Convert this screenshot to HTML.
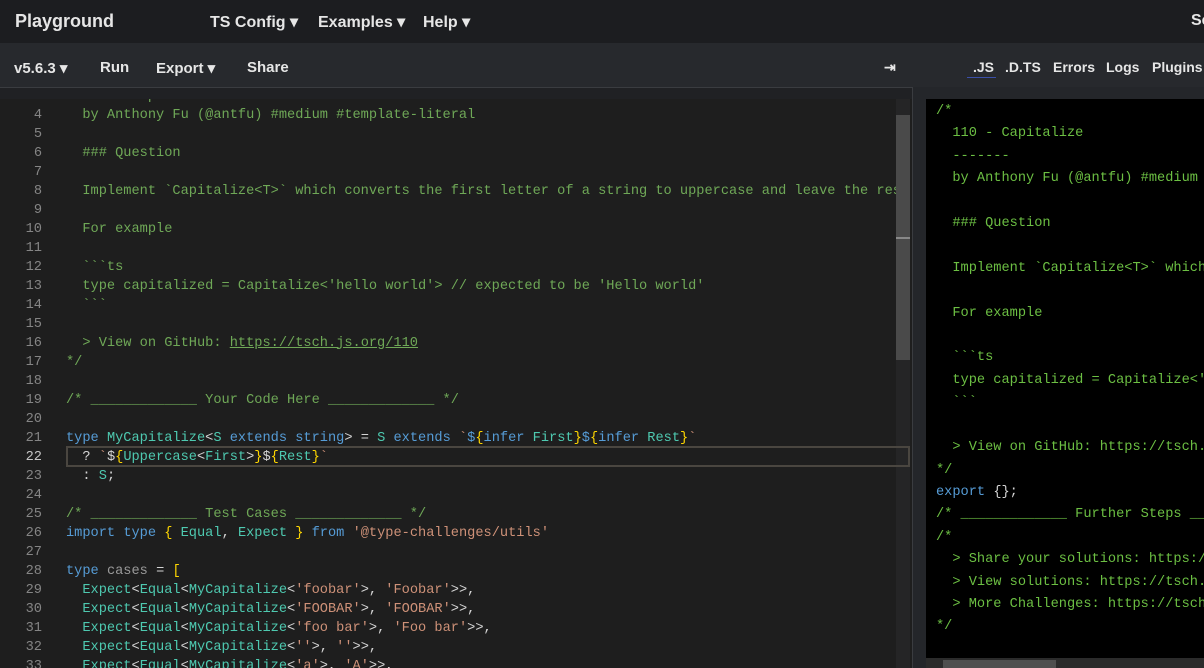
<!DOCTYPE html>
<html><head><meta charset="utf-8"><style>
*{margin:0;padding:0;box-sizing:border-box}
body{width:1204px;height:668px;overflow:hidden;background:#1e1e1e;font-family:"Liberation Sans",sans-serif;position:relative;color:#ddd}
.top{position:absolute;left:0;top:0;width:1204px;height:43px;background:#1c1d20}
.top span{position:absolute;top:12px;font-weight:bold;font-size:16px;color:#e6e6e6}
.bar{position:absolute;left:0;top:43px;width:1204px;height:44px;background:#27292d}
.bar span{position:absolute;top:16px;font-weight:bold;font-size:15px;color:#e6e6e6}
.strip{position:absolute;left:0;top:87px;width:912px;height:12px;background:#202124;border-top:1px solid #3a3c40}
.rstrip{position:absolute;left:912px;top:87px;width:292px;height:581px;background:#24262a;border-left:1px solid #3a3c40}
.code{font-family:"Liberation Mono",monospace;font-size:13.65px;white-space:pre}
.c{color:#6fa857}.k{color:#569cd6}.t{color:#4ec9b0}.s{color:#ce9178}.y{color:#ffd700}.w{color:#d4d4d4}.g{color:#9a9a9a}.u{text-decoration:underline}
.rc{color:#6cbf43}
</style></head><body>
<div class="top">
<span style="left:15px;font-size:18px;top:11px">Playground</span>
<span style="left:210px">TS Config ▾</span>
<span style="left:318px">Examples ▾</span>
<span style="left:423px">Help ▾</span>
<span style="left:1191px">Se</span>
</div>
<div class="bar">
<span style="left:14px">v5.6.3 ▾</span>
<span style="left:100px">Run</span>
<span style="left:156px">Export ▾</span>
<span style="left:247px">Share</span>
<span style="left:884px;font-size:14px">⇥</span>
<span style="left:973px;font-size:14px">.JS</span>
<span style="left:1005px;font-size:14px">.D.TS</span>
<span style="left:1053px;font-size:14px">Errors</span>
<span style="left:1106px;font-size:14px">Logs</span>
<span style="left:1152px;font-size:14px">Plugins</span>
<div style="position:absolute;left:967px;top:34px;width:29px;height:1px;background:#3b4fa8"></div>
</div>
<div class="strip"></div>
<div class="rstrip"></div>
<div style="position:absolute;left:0;top:99px;width:912px;height:569px;background:#1e1e1e;overflow:hidden">
<div style="position:absolute;left:896px;top:0;width:14px;height:569px;background:#252526"></div>
<div style="position:absolute;left:896px;top:16px;width:14px;height:245px;background:#4a4a4a"></div>
<div style="position:absolute;left:896px;top:138px;width:14px;height:2px;background:#888"></div>
<div style="position:absolute;left:66px;top:347px;width:844px;height:21px;border:2px solid #4a4640"></div>
<div class="code" style="position:absolute;left:0;top:-12.5px;width:42px;text-align:right;color:#858585;line-height:19px">3
4
5
6
7
8
9
10
11
12
13
14
15
16
17
18
19
20
21
<span style="color:#c6c6c6">22</span>
23
24
25
26
27
28
29
30
31
32
33</div>
<div class="code" style="position:absolute;left:66px;top:-12.5px;width:830px;overflow:hidden;line-height:19px"><span class="c">  110 - Capitalize</span>
<span class="c">  by Anthony Fu (@antfu) #medium #template-literal</span>

<span class="c">  ### Question</span>

<span class="c">  Implement &#96;Capitalize&lt;T&gt;&#96; which converts the first letter of a string to uppercase and leave the rest as-is.</span>

<span class="c">  For example</span>

<span class="c">  &#96;&#96;&#96;ts</span>
<span class="c">  type capitalized = Capitalize&lt;'hello world'&gt; // expected to be 'Hello world'</span>
<span class="c">  &#96;&#96;&#96;</span>

<span class="c">  &gt; View on GitHub: <span class="u">https://tsch.js.org/110</span></span>
<span class="c">*/</span>

<span class="c">/* _____________ Your Code Here _____________ */</span>

<span class="k">type</span> <span class="t">MyCapitalize</span><span class="w">&lt;</span><span class="t">S</span> <span class="k">extends</span> <span class="k">string</span><span class="w">&gt; = </span><span class="t">S</span> <span class="k">extends</span> <span class="s">&#96;</span><span class="k">$</span><span class="y">{</span><span class="k">infer</span> <span class="t">First</span><span class="y">}</span><span class="k">$</span><span class="y">{</span><span class="k">infer</span> <span class="t">Rest</span><span class="y">}</span><span class="s">&#96;</span>
<span class="w">  ? </span><span class="s">&#96;</span><span class="w">$</span><span class="y">{</span><span class="t">Uppercase</span><span class="w">&lt;</span><span class="t">First</span><span class="w">&gt;</span><span class="y">}</span><span class="w">$</span><span class="y">{</span><span class="t">Rest</span><span class="y">}</span><span class="s">&#96;</span>
<span class="w">  : </span><span class="t">S</span><span class="w">;</span>

<span class="c">/* _____________ Test Cases _____________ */</span>
<span class="k">import</span> <span class="k">type</span> <span class="y">{</span> <span class="t">Equal</span><span class="w">,</span> <span class="t">Expect</span> <span class="y">}</span> <span class="k">from</span> <span class="s">'@type-challenges/utils'</span>

<span class="k">type</span> <span class="g">cases</span> <span class="w">=</span> <span class="y">[</span>
  <span class="t">Expect</span><span class="w">&lt;</span><span class="t">Equal</span><span class="w">&lt;</span><span class="t">MyCapitalize</span><span class="w">&lt;</span><span class="s">'foobar'</span><span class="w">&gt;, </span><span class="s">'Foobar'</span><span class="w">&gt;&gt;,</span>
  <span class="t">Expect</span><span class="w">&lt;</span><span class="t">Equal</span><span class="w">&lt;</span><span class="t">MyCapitalize</span><span class="w">&lt;</span><span class="s">'FOOBAR'</span><span class="w">&gt;, </span><span class="s">'FOOBAR'</span><span class="w">&gt;&gt;,</span>
  <span class="t">Expect</span><span class="w">&lt;</span><span class="t">Equal</span><span class="w">&lt;</span><span class="t">MyCapitalize</span><span class="w">&lt;</span><span class="s">'foo bar'</span><span class="w">&gt;, </span><span class="s">'Foo bar'</span><span class="w">&gt;&gt;,</span>
  <span class="t">Expect</span><span class="w">&lt;</span><span class="t">Equal</span><span class="w">&lt;</span><span class="t">MyCapitalize</span><span class="w">&lt;</span><span class="s">''</span><span class="w">&gt;, </span><span class="s">''</span><span class="w">&gt;&gt;,</span>
  <span class="t">Expect</span><span class="w">&lt;</span><span class="t">Equal</span><span class="w">&lt;</span><span class="t">MyCapitalize</span><span class="w">&lt;</span><span class="s">'a'</span><span class="w">&gt;, </span><span class="s">'A'</span><span class="w">&gt;&gt;,</span></div>
</div>
<div style="position:absolute;left:926px;top:99px;width:278px;height:569px;background:#000;overflow:hidden">
<div class="code rc" style="position:absolute;left:10px;top:2px;line-height:22.4px">/*
  110 - Capitalize
  -------
  by Anthony Fu (@antfu) #medium #template-literal

  ### Question

  Implement &#96;Capitalize&lt;T&gt;&#96; which converts

  For example

  &#96;&#96;&#96;ts
  type capitalized = Capitalize&lt;'hello world'&gt;
  &#96;&#96;&#96;

  &gt; View on GitHub: https://tsch.js.org/110
*/
<span class="k">export</span> <span class="w">{};</span>
/* _____________ Further Steps _____________ */
/*
  &gt; Share your solutions: https://tsch.js.org
  &gt; View solutions: https://tsch.js.org
  &gt; More Challenges: https://tsch.js.org
*/</div>
<div style="position:absolute;left:0;top:559px;width:278px;height:10px;background:#2b2b2b"></div>
<div style="position:absolute;left:17px;top:561px;width:113px;height:8px;background:#4f4f4f"></div>
</div>
</body></html>
